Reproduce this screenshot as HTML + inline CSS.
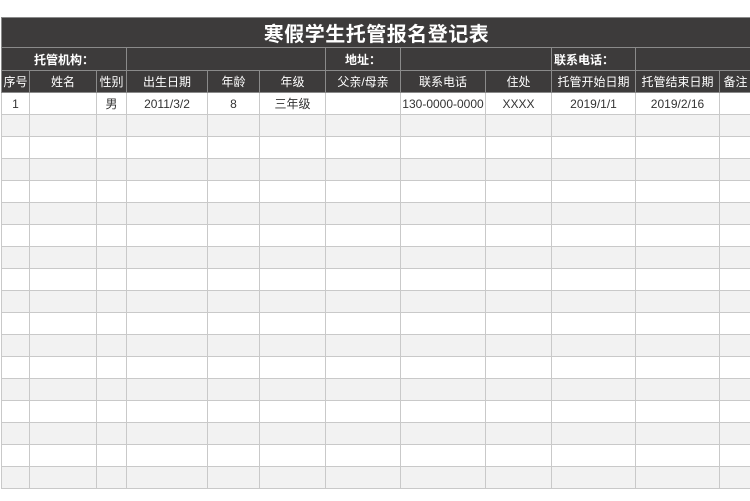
<!DOCTYPE html>
<html><head><meta charset="utf-8"><style>
html,body{margin:0;padding:0;background:#fff;width:750px;height:501px;overflow:hidden}
table{position:absolute;left:1px;top:17px;width:750px;border-collapse:collapse;table-layout:fixed;font-family:"Liberation Sans","Noto Sans CJK SC",sans-serif;font-size:12px;color:#333}
td{border:1px solid #c9c9c9;height:21px;padding:0;text-align:center;white-space:nowrap;overflow:hidden}
tr.d td{background:#3d3b3b;color:#fff;border-color:#8a8a8a}
tr.t td{height:29px;font-size:20px;font-weight:bold;letter-spacing:0.5px}
tr.i td{height:22px;font-weight:bold;font-size:12px}
tr.g td{background:#f2f2f2}
</style></head><body>
<table>
<colgroup><col style="width:28px"><col style="width:67px"><col style="width:30px"><col style="width:81px"><col style="width:52px"><col style="width:66px"><col style="width:75px"><col style="width:85px"><col style="width:66px"><col style="width:84px"><col style="width:84px"><col style="width:32px"></colgroup>
<tr class="d t"><td colspan="12">寒假学生托管报名登记表</td></tr>
<tr class="d i"><td colspan="3">托管机构：</td><td colspan="3"></td><td>地址：</td><td colspan="2"></td><td style="text-align:left;padding-left:2px">联系电话：</td><td colspan="2"></td></tr>
<tr class="d"><td>序号</td><td>姓名</td><td>性别</td><td>出生日期</td><td>年龄</td><td>年级</td><td>父亲/母亲</td><td>联系电话</td><td>住处</td><td>托管开始日期</td><td>托管结束日期</td><td>备注</td></tr>
<tr><td>1</td><td></td><td>男</td><td>2011/3/2</td><td>8</td><td>三年级</td><td></td><td>130-0000-0000</td><td>XXXX</td><td>2019/1/1</td><td>2019/2/16</td><td></td></tr>
<tr class="g"><td></td><td></td><td></td><td></td><td></td><td></td><td></td><td></td><td></td><td></td><td></td><td></td></tr>
<tr><td></td><td></td><td></td><td></td><td></td><td></td><td></td><td></td><td></td><td></td><td></td><td></td></tr>
<tr class="g"><td></td><td></td><td></td><td></td><td></td><td></td><td></td><td></td><td></td><td></td><td></td><td></td></tr>
<tr><td></td><td></td><td></td><td></td><td></td><td></td><td></td><td></td><td></td><td></td><td></td><td></td></tr>
<tr class="g"><td></td><td></td><td></td><td></td><td></td><td></td><td></td><td></td><td></td><td></td><td></td><td></td></tr>
<tr><td></td><td></td><td></td><td></td><td></td><td></td><td></td><td></td><td></td><td></td><td></td><td></td></tr>
<tr class="g"><td></td><td></td><td></td><td></td><td></td><td></td><td></td><td></td><td></td><td></td><td></td><td></td></tr>
<tr><td></td><td></td><td></td><td></td><td></td><td></td><td></td><td></td><td></td><td></td><td></td><td></td></tr>
<tr class="g"><td></td><td></td><td></td><td></td><td></td><td></td><td></td><td></td><td></td><td></td><td></td><td></td></tr>
<tr><td></td><td></td><td></td><td></td><td></td><td></td><td></td><td></td><td></td><td></td><td></td><td></td></tr>
<tr class="g"><td></td><td></td><td></td><td></td><td></td><td></td><td></td><td></td><td></td><td></td><td></td><td></td></tr>
<tr><td></td><td></td><td></td><td></td><td></td><td></td><td></td><td></td><td></td><td></td><td></td><td></td></tr>
<tr class="g"><td></td><td></td><td></td><td></td><td></td><td></td><td></td><td></td><td></td><td></td><td></td><td></td></tr>
<tr><td></td><td></td><td></td><td></td><td></td><td></td><td></td><td></td><td></td><td></td><td></td><td></td></tr>
<tr class="g"><td></td><td></td><td></td><td></td><td></td><td></td><td></td><td></td><td></td><td></td><td></td><td></td></tr>
<tr><td></td><td></td><td></td><td></td><td></td><td></td><td></td><td></td><td></td><td></td><td></td><td></td></tr>
<tr class="g"><td></td><td></td><td></td><td></td><td></td><td></td><td></td><td></td><td></td><td></td><td></td><td></td></tr>
</table>
</body></html>
